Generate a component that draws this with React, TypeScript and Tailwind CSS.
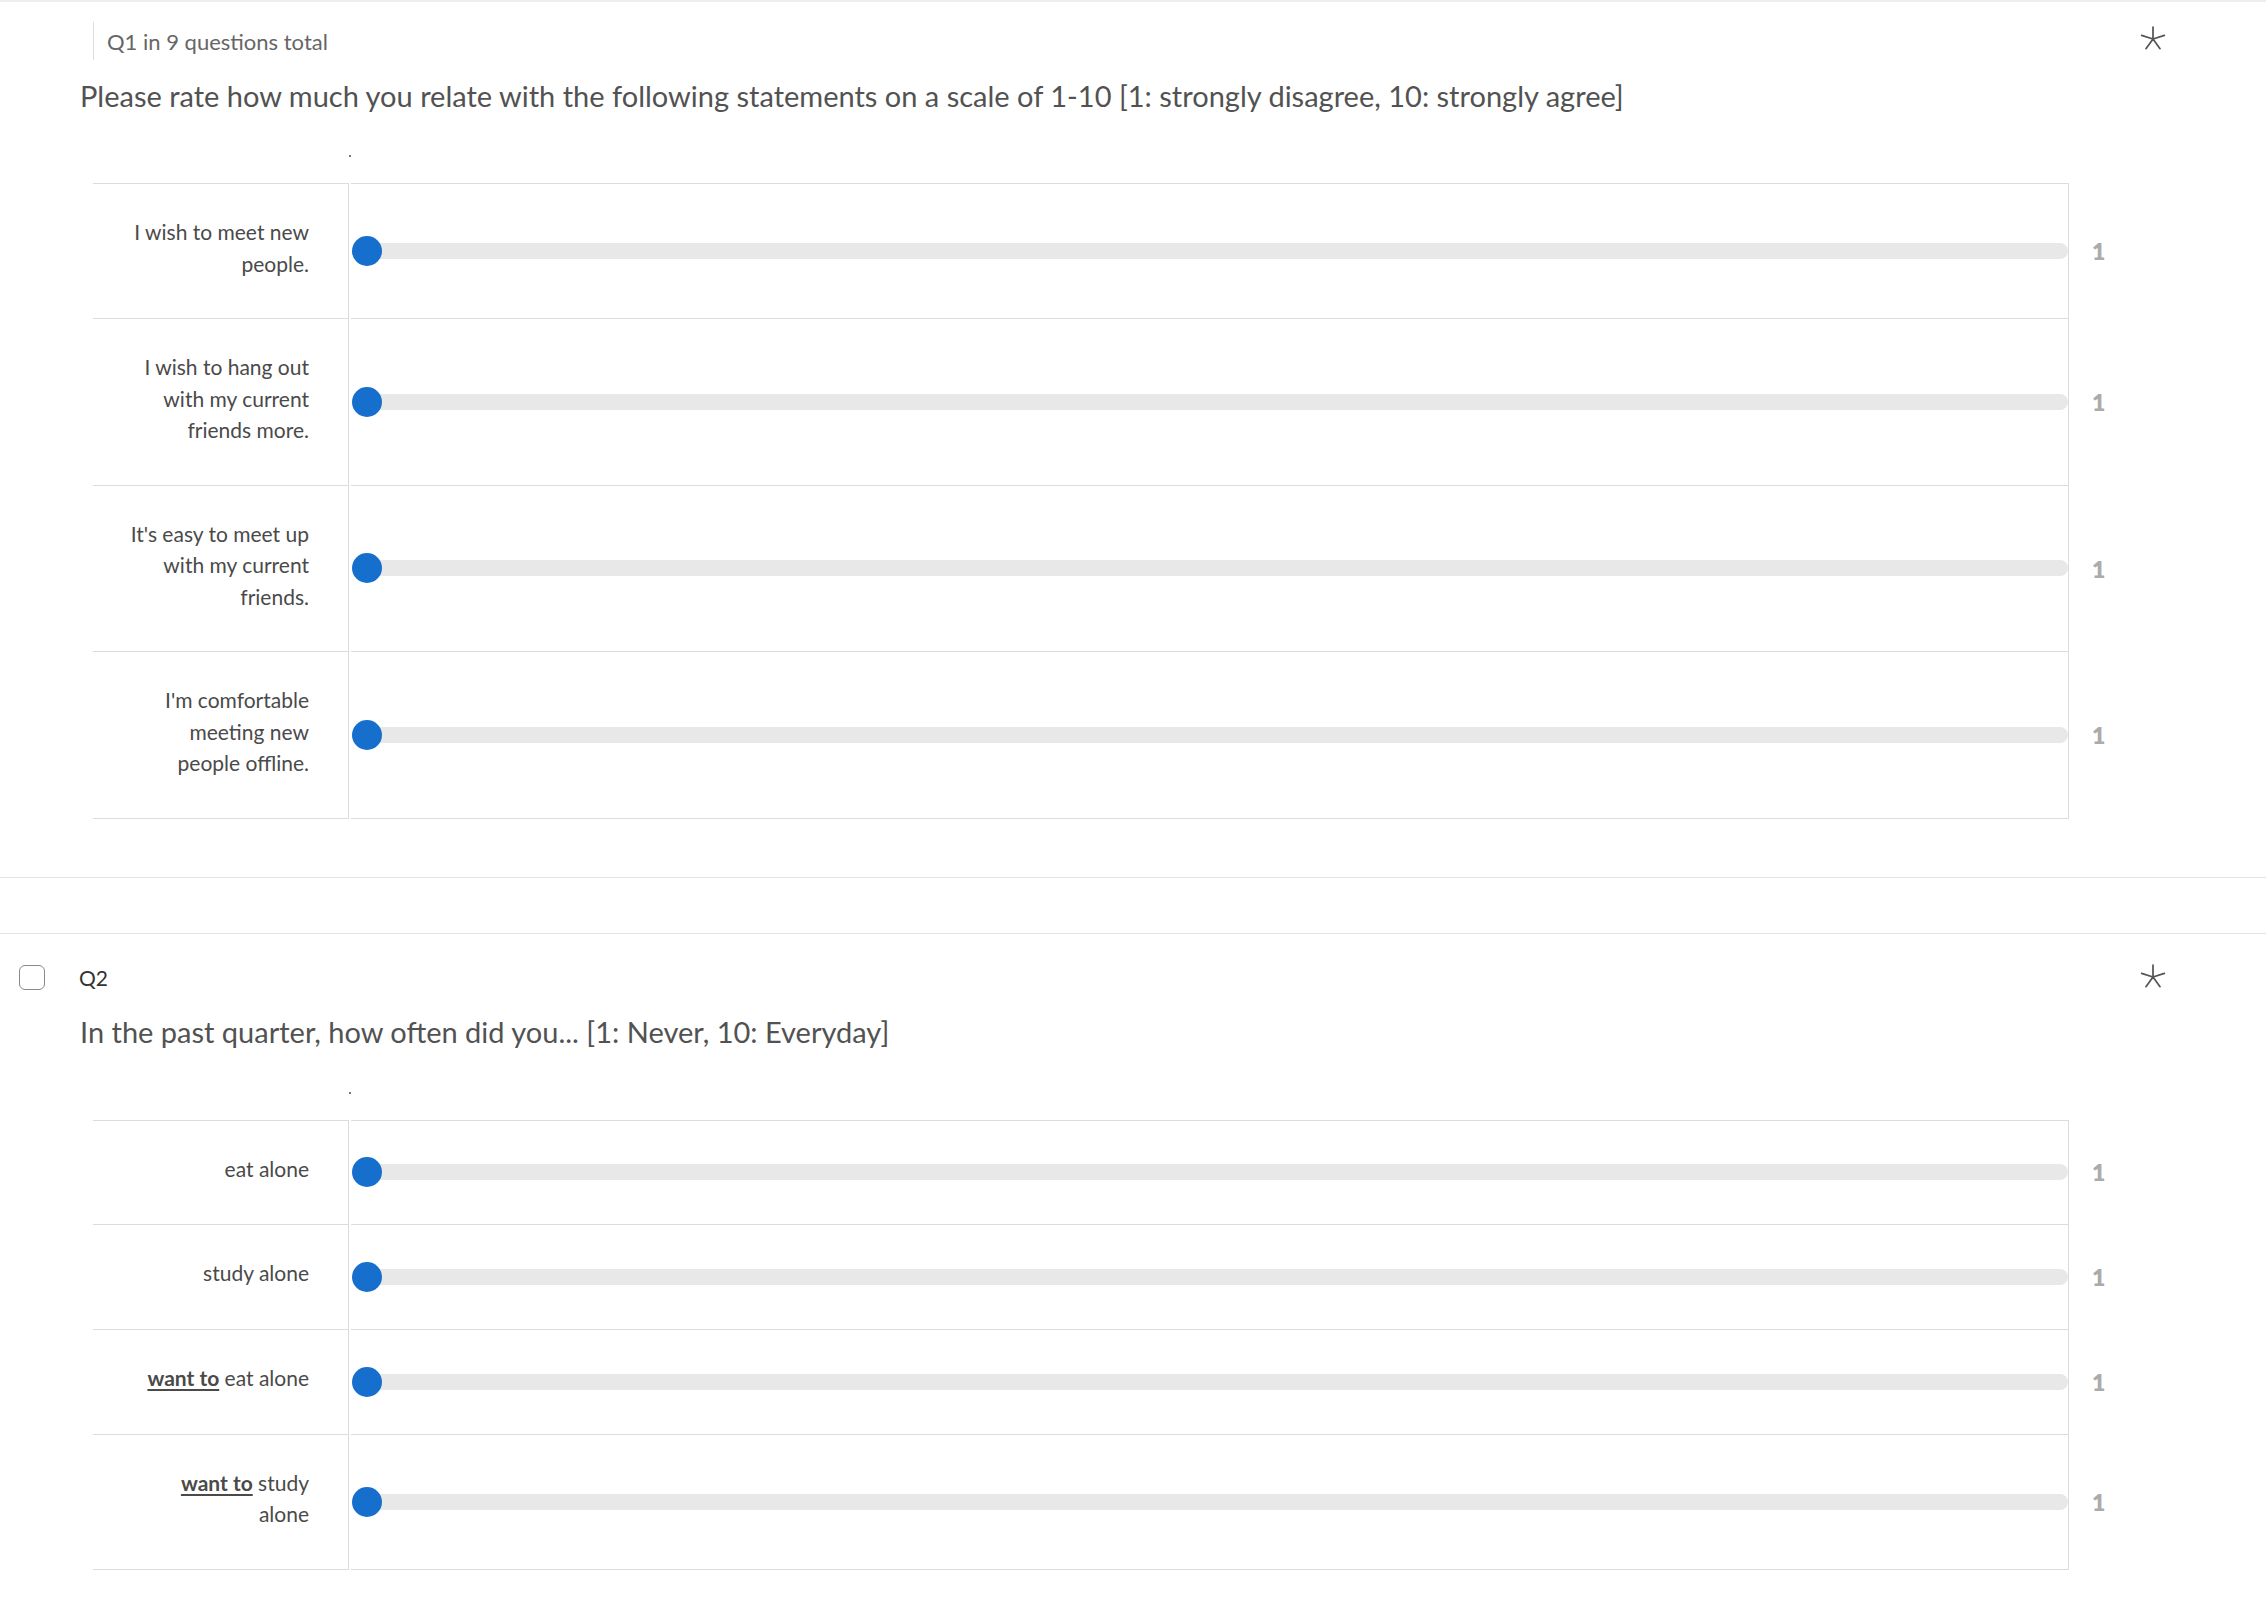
import React from 'react';

type Row = { label: React.ReactNode };

const q1Rows: Row[] = [
  { label: <>I wish to meet new<br />people.</> },
  { label: <>I wish to hang out<br />with my current<br />friends more.</> },
  { label: <>It's easy to meet up<br />with my current<br />friends.</> },
  { label: <>I'm comfortable<br />meeting new<br />people offline.</> },
];

const q2Rows: Row[] = [
  { label: <>eat alone</> },
  { label: <>study alone</> },
  {
    label: (
      <>
        <b className="font-bold underline underline-offset-[3px]">want to</b> eat alone
      </>
    ),
  },
  {
    label: (
      <>
        <b className="font-bold underline underline-offset-[3px]">want to</b> study
        <br />
        alone
      </>
    ),
  },
];

function Asterisk() {
  return (
    <svg width="26" height="26" viewBox="0 0 24 24" fill="none" stroke="#555" strokeWidth="1.6" strokeLinecap="round">
      <path d="M12 12V1M12 12L22.5 8.6M12 12L18.5 20.9M12 12L5.5 20.9M12 12L1.5 8.6" />
    </svg>
  );
}

function SliderTable({ rows }: { rows: Row[] }) {
  return (
    <div className="ml-[93px] flex flex-col">
      {rows.map((row, i) => (
        <div key={i} className="flex items-stretch">
          <div
            className={`min-h-[105px] w-[256px] shrink-0 border-b border-r border-[#dcdcdc] pb-[39px] pr-[39px] pt-[32px] text-right text-[21px] leading-[31.5px] text-[#4a4a4a] ${i === 0 ? 'border-t' : ''}`}
          >
            {row.label}
          </div>
          <div
            className={`ml-[2px] flex w-[1718px] items-center border-b border-r border-[#dcdcdc] pl-[1px] ${i === 0 ? 'border-t' : ''}`}
          >
            <div className="relative flex h-[30px] w-full items-center">
              <div className="absolute left-[15px] right-0 h-[16px] rounded-r-full bg-[#e8e8e8]" />
              <div className="relative h-[30px] w-[30px] rounded-full bg-[#176fcd]" />
            </div>
          </div>
          <div className="flex items-center pl-[23px] text-[23px] font-extrabold text-[#ababab]">1</div>
        </div>
      ))}
    </div>
  );
}

export default function App() {
  return (
    <div className="min-h-[1600px] w-full border-t-2 border-[#eeeeee] bg-white font-['Lato','Liberation_Sans',sans-serif]">
      {/* Q1 */}
      <section className="relative border-b border-[#e3e3e3] pb-[58px] pt-[20px]">
        <div className="absolute right-[100px] top-[24px]">
          <Asterisk />
        </div>
        <div className="pl-[93px]">
          <div className="flex h-[38px] items-center border-l border-[#dddddd] pl-[13px] text-[22px] text-[#666]">
            Q1 in 9 questions total
          </div>
        </div>
        <h2 className="mt-[19px] pl-[80px] text-[29px] leading-[34px] text-[#525252]">
          Please rate how much you relate with the following statements on a scale of 1-10 [1: strongly disagree, 10: strongly agree]
        </h2>
        <div className="h-[70px] pl-[349px] pt-[42px]">
          <div className="h-[2px] w-[2px] bg-[#777]" />
        </div>
        <SliderTable rows={q1Rows} />
      </section>

      <div className="h-[56px] border-b border-[#e3e3e3]" />

      {/* Q2 */}
      <section className="relative pb-[30px] pt-[31px]">
        <div className="absolute right-[100px] top-[30px]">
          <Asterisk />
        </div>
        <div className="flex h-[26px] items-center gap-[34px] pl-[19px]">
          <div className="h-[25px] w-[26px] rounded-[6px] border border-[#8a8a8a] bg-white" />
          <span className="text-[21px] text-[#333]">Q2</span>
        </div>
        <h2 className="mt-[24px] pl-[80px] text-[29px] leading-[34px] text-[#525252]">
          In the past quarter, how often did you... [1: Never, 10: Everyday]
        </h2>
        <div className="h-[71px] pl-[349px] pt-[43px]">
          <div className="h-[2px] w-[2px] bg-[#777]" />
        </div>
        <SliderTable rows={q2Rows} />
      </section>
    </div>
  );
}
